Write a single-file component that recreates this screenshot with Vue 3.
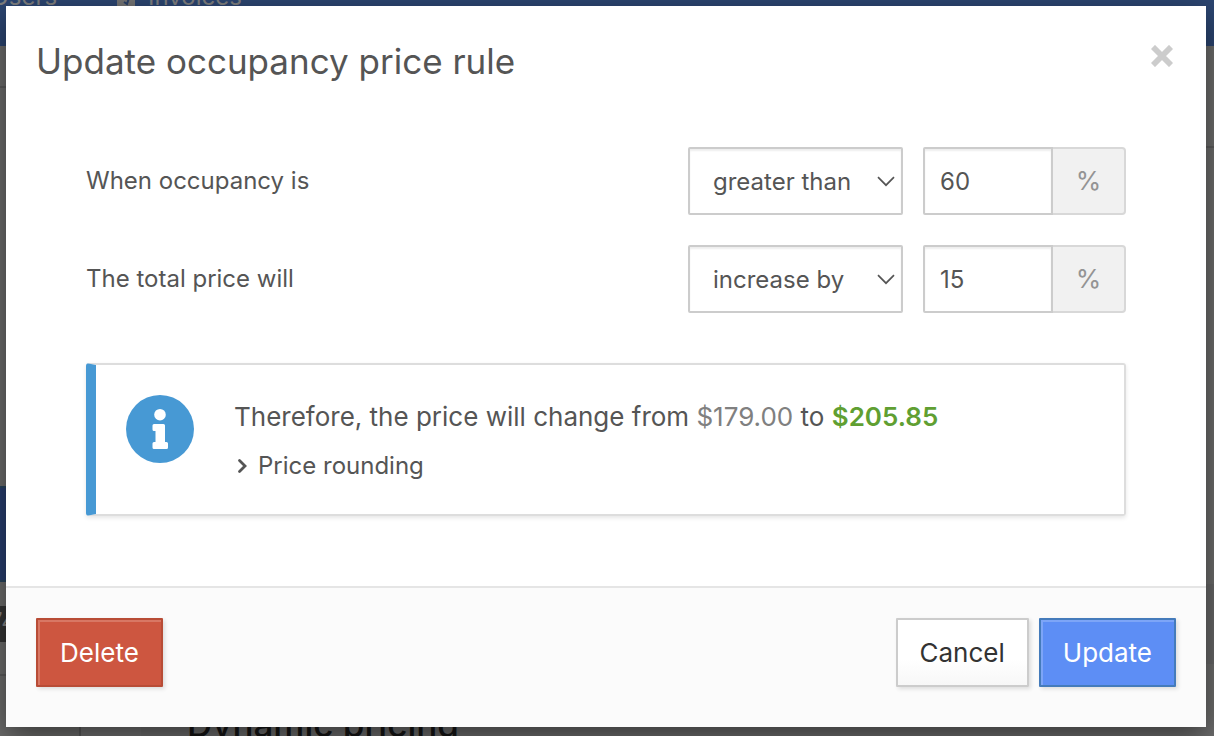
<script setup>
import { ref } from 'vue'

const comparison = ref('greater than')
const occupancy = ref('60')
const direction = ref('increase by')
const change = ref('15')
</script>

<template>
  <div class="screen">
    <div class="page" aria-hidden="true">
      <div class="topbar">
        <span class="nav-users">Users</span>
        <svg class="nav-icon" viewBox="0 0 18 20">
          <rect width="18" height="20" fill="#757575" />
          <path d="M7 15l3 2 2-6" fill="none" stroke="#2a4169" stroke-width="2" />
        </svg>
        <span class="nav-invoices">Invoices</span>
      </div>
      <div class="side-line upper"></div>
      <div class="right-line"></div>
      <div class="right-panel"></div>
      <div class="side-blue"></div>
      <div class="side-dark">74</div>
      <div class="side-line lower"></div>
      <div class="bottom-panel"></div>
      <div class="page-heading">Dynamic pricing</div>
    </div>

    <form class="modal" role="dialog" aria-labelledby="dialog-title" @submit.prevent>
      <header class="modal-header">
        <h1 id="dialog-title">Update occupancy price rule</h1>
        <button type="button" class="close" aria-label="Close">
          <svg viewBox="0 0 22 22" width="22" height="22">
            <path d="M4 4L18 18M18 4L4 18" stroke="#ccc" stroke-width="5.8" stroke-linecap="square" />
          </svg>
        </button>
      </header>

      <div class="modal-body">
        <div class="row">
          <label for="comparison">When occupancy is</label>
          <div class="select-wrap">
            <select id="comparison" v-model="comparison">
              <option>greater than</option>
              <option>less than</option>
            </select>
            <svg class="chevron" viewBox="0 0 18 11" width="18" height="11">
              <path d="M1 1.2L9 9.2L17 1.2" fill="none" stroke="#555" stroke-width="1.7" />
            </svg>
          </div>
          <div class="group">
            <input v-model="occupancy" type="text" aria-label="Occupancy percentage" />
            <span class="addon">%</span>
          </div>
        </div>

        <div class="row">
          <label for="direction">The total price will</label>
          <div class="select-wrap">
            <select id="direction" v-model="direction">
              <option>increase by</option>
              <option>decrease by</option>
            </select>
            <svg class="chevron" viewBox="0 0 18 11" width="18" height="11">
              <path d="M1 1.2L9 9.2L17 1.2" fill="none" stroke="#555" stroke-width="1.7" />
            </svg>
          </div>
          <div class="group">
            <input v-model="change" type="text" aria-label="Price change percentage" />
            <span class="addon">%</span>
          </div>
        </div>

        <section class="notice">
          <svg class="info" viewBox="0 0 68 68" width="68" height="68">
            <circle cx="34" cy="34" r="34" fill="#4799d4" />
            <circle cx="34" cy="19.7" r="5.8" fill="#fff" />
            <path d="M28 29h9.5q1.5 0 1.5 1.5V47h1.500q1.500 0 1.500 1.500v4q0 1.500-1.500 1.500H28q-1.500 0-1.500-1.500v-4q0-1.500 1.500-1.500h1.500V36H28q-1.500 0-1.500-1.500v-4q0-1.500 1.500-1.500z" fill="#fff" />
          </svg>
          <div class="notice-text">
            <p class="summary">
              Therefore, the price will change from <span class="old">$179.00</span> to
              <strong>$205.85</strong>
            </p>
            <button type="button" class="rounding">
              <svg viewBox="0 0 12 16" width="12" height="16">
                <path d="M3.500 2.500L9 8L3.500 13.500" fill="none" stroke="#555" stroke-width="2.800" stroke-linecap="round" />
              </svg>
              Price rounding
            </button>
          </div>
        </section>
      </div>

      <footer class="modal-footer">
        <button type="button" class="btn danger">Delete</button>
        <span class="spacer"></span>
        <button type="button" class="btn plain">Cancel</button>
        <button type="submit" class="btn primary">Update</button>
      </footer>
    </form>
  </div>
</template>

<style>
body {
  margin: 0;
}
</style>

<style scoped>
.screen,
.screen * {
  box-sizing: border-box;
}
.screen {
  position: relative;
  display: flex;
  min-height: 100vh;
  padding: 6px 8px 9px 6px;
  overflow: hidden;
  font-family: Inter, "Liberation Sans", sans-serif;
  font-size: 24px;
  color: #555;
}
button,
input,
select {
  font-family: inherit;
  margin: 0;
}

/* dimmed page behind the dialog */
.page {
  position: absolute;
  inset: 0;
  background: #6e6e6d;
}
.page > * {
  position: absolute;
}
.topbar {
  inset: 0 0 auto;
  height: 46px;
  background: #2c4672;
  color: #808080;
  line-height: 30px;
}
.topbar > * {
  position: absolute;
}
.nav-users {
  left: -9px;
  top: -18px;
}
.nav-icon {
  left: 117px;
  top: -13px;
  width: 18px;
  height: 20px;
}
.nav-invoices {
  left: 148px;
  top: -18px;
}
.side-line {
  left: 0;
  width: 80px;
  height: 2px;
  background: #5d5d5d;
}
.side-line.upper {
  top: 86px;
}
.side-line.lower {
  top: 674px;
}
.right-line {
  right: 0;
  top: 146px;
  width: 20px;
  height: 2px;
  background: #5d5d5d;
}
.right-panel {
  right: 0;
  top: 584px;
  width: 20px;
  height: 80px;
  background: #686868;
}
.side-blue {
  left: 0;
  top: 486px;
  width: 20px;
  height: 96px;
  background: #293f70;
  border: solid #29455e;
  border-width: 2px 0;
}
.side-dark {
  left: 0;
  top: 606px;
  width: 40px;
  height: 36px;
  background: #353535;
  color: #858585;
  font-size: 24px;
  line-height: 32px;
  text-indent: -11px;
}
.bottom-panel {
  left: 79px;
  right: 0;
  bottom: 0;
  height: 20px;
  border-left: 2px solid #5a5a5a;
  background: linear-gradient(90deg, #727272 60px, #6e6e6e 60px);
}
.page-heading {
  left: 187px;
  bottom: -10px;
  color: #161616;
  font-size: 35px;
  font-weight: 500;
  line-height: 44px;
}

.modal {
  position: relative;
  display: flex;
  flex: 1;
  flex-direction: column;
  background: #fff;
  box-shadow: 0 10px 30px rgba(0, 0, 0, 0.5);
}
.modal-header {
  display: flex;
  align-items: flex-start;
  justify-content: space-between;
  padding: 30px 33px 0 30px;
}
h1 {
  margin: 0;
  font-size: 35px;
  font-weight: 400;
  line-height: 50px;
}
.close {
  display: flex;
  padding: 9px 0;
  border: 0;
  background: none;
}
.modal-body {
  display: flex;
  flex: 1;
  flex-direction: column;
  gap: 30px;
  padding: 61px 80px 70px;
}
.row {
  display: grid;
  grid-template-columns: 1fr 215px 203px;
  column-gap: 20px;
  align-items: center;
}
label {
  padding-bottom: 2px;
}
.select-wrap {
  position: relative;
  display: flex;
}
select {
  width: 100%;
  height: 68px;
  padding: 0 40px 0 23px;
  appearance: none;
  border: 2px solid #ccc;
  border-radius: 2px;
  background: #fff;
  box-shadow: inset 0 2px 2px rgba(0, 0, 0, 0.07);
  color: #555;
  font-size: 24px;
}
.chevron {
  position: absolute;
  right: 8px;
  top: 29px;
  pointer-events: none;
}
.group {
  display: flex;
}
input {
  width: 130px;
  height: 68px;
  padding: 0 15px;
  border: 2px solid #ccc;
  border-radius: 2px 0 0 2px;
  background: #fff;
  box-shadow: inset 0 2px 2px rgba(0, 0, 0, 0.07);
  color: #555;
  font-size: 24px;
}
.addon {
  display: flex;
  flex: 1;
  align-items: center;
  justify-content: center;
  padding-bottom: 2px;
  border: 2px solid #d8d8d8;
  border-left: 0;
  border-radius: 0 4px 4px 0;
  background: #f1f1f1;
  color: #949494;
  font-size: 26px;
}
.notice {
  display: flex;
  gap: 40px;
  margin-top: 20px;
  padding: 30px;
  border: 2px solid #ddd;
  border-left: 10px solid #4799d4;
  border-radius: 3px;
  box-shadow: 0 2px 4px rgba(0, 0, 0, 0.1);
}
.info {
  flex: none;
}
.notice-text {
  display: flex;
  flex-direction: column;
  align-items: flex-start;
  gap: 11px;
}
.summary {
  margin: 0;
  padding-top: 2px;
  font-size: 26px;
  line-height: 40px;
}
.old {
  color: #808080;
}
strong {
  color: #609f32;
  font-weight: 600;
}
.rounding {
  display: flex;
  gap: 10px;
  align-items: center;
  padding: 0 2px;
  border: 0;
  background: none;
  color: #555;
  font-size: 24px;
  line-height: 36px;
}
.modal-footer {
  display: flex;
  gap: 10px;
  padding: 30px 30px 40px;
  border-top: 2px solid #e5e5e5;
  background: #fbfbfb;
}
.spacer {
  flex: 1;
}
.btn {
  height: 69px;
  padding: 0 22px;
  border: 2px solid;
  border-radius: 1px;
  font-size: 26px;
  box-shadow: 2px 2px 4px rgba(0, 0, 0, 0.12);
}
.danger {
  border-color: #b84c36;
  background: #cd5640;
  color: #fff;
  box-shadow: inset 2px 2px 0 #d87764, 2px 2px 4px rgba(0, 0, 0, 0.12);
}
.plain {
  border-color: #ccc;
  background: linear-gradient(#fff 60%, #f7f7f7);
  color: #333;
}
.primary {
  border-color: #447bbb;
  background: #5d8ef5;
  color: #fff;
  box-shadow: inset 2px 2px 0 #7da5f7, 2px 2px 4px rgba(0, 0, 0, 0.12);
}
</style>
